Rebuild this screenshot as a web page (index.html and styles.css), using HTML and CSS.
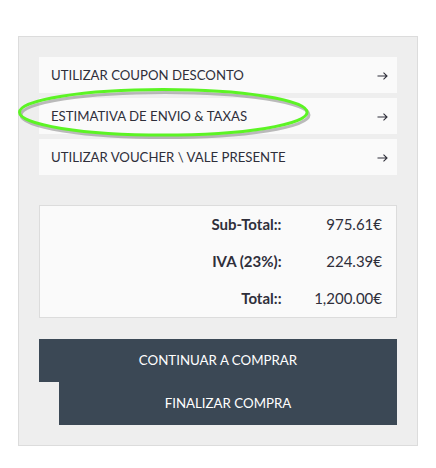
FILE: index.html
```html
<!DOCTYPE html>
<html lang="pt">
<head>
<meta charset="utf-8">
<title>Carrinho</title>
<link rel="stylesheet" href="styles.css">
</head>
<body>
<div class="panel">
  <ul class="options">
    <li class="option"><span>UTILIZAR COUPON DESCONTO</span><svg class="arrow" width="11" height="8" viewBox="0 0 11 8"><path d="M0.5 4H10M6.5 0.7L10 4L6.5 7.3" fill="none" stroke="#2f2f3a" stroke-width="1.1"/></svg></li>
    <li class="option"><span>ESTIMATIVA DE ENVIO &amp; TAXAS</span><svg class="arrow" width="11" height="8" viewBox="0 0 11 8"><path d="M0.5 4H10M6.5 0.7L10 4L6.5 7.3" fill="none" stroke="#2f2f3a" stroke-width="1.1"/></svg></li>
    <li class="option"><span>UTILIZAR VOUCHER \ VALE PRESENTE</span><svg class="arrow" width="11" height="8" viewBox="0 0 11 8"><path d="M0.5 4H10M6.5 0.7L10 4L6.5 7.3" fill="none" stroke="#2f2f3a" stroke-width="1.1"/></svg></li>
  </ul>
  <table class="totals">
    <tr><td class="label">Sub-Total::</td><td class="value">975.61€</td></tr>
    <tr><td class="label">IVA (23%):</td><td class="value">224.39€</td></tr>
    <tr><td class="label">Total::</td><td class="value">1,200.00€</td></tr>
  </table>
  <div class="actions">
    <a class="btn btn-continue" href="#">CONTINUAR A COMPRAR</a>
    <a class="btn btn-checkout" href="#">FINALIZAR COMPRA</a>
  </div>
  <svg class="highlight" width="300" height="58" viewBox="0 0 300 58">
    <ellipse cx="147" cy="29" rx="144" ry="22.5" fill="none" stroke="#8f8f8f" stroke-width="3" opacity="0.6"/>
    <ellipse cx="145.3" cy="26.3" rx="143.8" ry="22.8" fill="none" stroke="#5cf424" stroke-width="3"/>
  </svg>
</div>
</body>
</html>
```

FILE: styles.css
```css
* { box-sizing: border-box; }
html, body { margin: 0; padding: 0; background: #fff; }
body {
  font-family: "Lato", "Open Sans", sans-serif;
  color: #2f2f3a;
  padding: 36px 0 0 18px;
}
.panel {
  position: relative;
  width: 400px;
  background: #eeeeee;
  border: 1px solid #dcdcdc;
  padding: 20px;
}
.options {
  list-style: none;
  margin: 0;
  padding: 0;
  display: flex;
  flex-direction: column;
  gap: 5px;
}
.option {
  height: 36px;
  background: #fafafa;
  display: flex;
  align-items: center;
  justify-content: space-between;
  padding: 0 9px 0 12px;
  font-size: 13.2px;
}
.arrow {
  display: block;
  margin-top: 2px;
}
.totals {
  margin-top: 30px;
  width: 100%;
  border: 1px solid #dcdcdc;
  background: #fafafa;
  border-collapse: collapse;
  font-size: 15px;
}
.totals td {
  height: 37.3px;
  padding: 0;
}
.totals .label {
  text-align: right;
  font-weight: 700;
}
.totals .value {
  text-align: right;
  width: 115px;
  padding-right: 14px;
}
.actions {
  margin-top: 21px;
  display: flex;
  flex-direction: column;
}
.btn {
  display: flex;
  align-items: center;
  justify-content: center;
  height: 43px;
  background: #3b4855;
  color: #fff;
  text-decoration: none;
  font-size: 13.3px;
}
.btn-checkout {
  margin-left: 20px;
}
.highlight {
  position: absolute;
  left: -1px;
  top: 49px;
}
```
